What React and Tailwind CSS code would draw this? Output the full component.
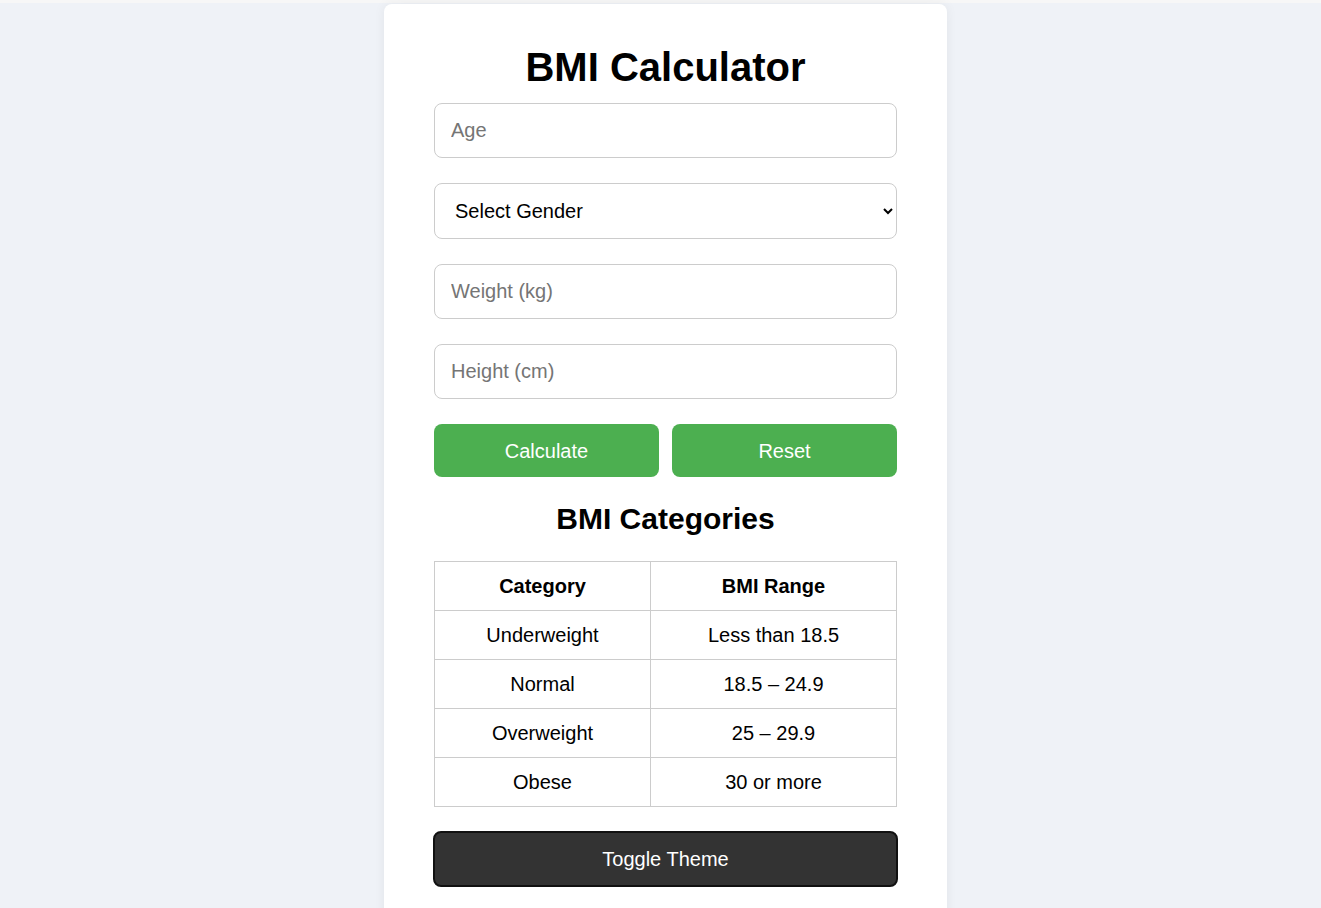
import React from "react";

const rows = [
  ["Underweight", "Less than 18.5"],
  ["Normal", "18.5 – 24.9"],
  ["Overweight", "25 – 29.9"],
  ["Obese", "30 or more"],
];

export default function App() {
  const font = { fontFamily: '"Liberation Sans", Arial, sans-serif' };
  return (
    <div className="min-h-[908px] bg-[#eff2f7] text-black" style={font}>
      <div className="h-[3px] bg-[#f7f7f7]" />
      <div className="flex justify-center pl-[10px] pt-[1px]">
        <div className="w-[563px] rounded-[8px] bg-white px-[50px] pt-[40px] pb-[40px] shadow-[0_0_12px_rgba(0,0,0,0.06)]">
          <h1 className="text-center text-[40px] font-bold leading-[46px]">BMI Calculator</h1>
          <div className="mt-[13px] flex flex-col gap-[25px]">
            <input
              type="number"
              placeholder="Age"
              className="h-[55px] w-full rounded-[8px] border border-[#cccccc] bg-white px-[16px] text-[20px] leading-[23px] outline-none placeholder:text-[#757575]"
            />
            <select
              defaultValue=""
              className="h-[56px] w-full rounded-[8px] border border-[#cccccc] bg-white pl-[16px] pr-[18px] text-[20px] text-black outline-none"
            >
              <option value="">Select Gender</option>
              <option value="male">Male</option>
              <option value="female">Female</option>
            </select>
            <input
              type="number"
              placeholder="Weight (kg)"
              className="h-[55px] w-full rounded-[8px] border border-[#cccccc] bg-white px-[16px] text-[20px] leading-[23px] outline-none placeholder:text-[#757575]"
            />
            <input
              type="number"
              placeholder="Height (cm)"
              className="h-[55px] w-full rounded-[8px] border border-[#cccccc] bg-white px-[16px] text-[20px] leading-[23px] outline-none placeholder:text-[#757575]"
            />
            <div className="flex gap-[13px]">
              <button className="h-[53px] flex-1 rounded-[8px] bg-[#4caf50] text-[20px] text-white">Calculate</button>
              <button className="h-[53px] flex-1 rounded-[8px] bg-[#4caf50] text-[20px] text-white">Reset</button>
            </div>
          </div>
          <h2 className="mt-[25px] text-center text-[30px] font-bold leading-[34px]">BMI Categories</h2>
          <table className="mt-[25px] w-full border-collapse text-[20px] leading-[24px]">
            <thead>
              <tr>
                <th className="w-[216px] border border-[#cccccc] py-[12px] text-center font-bold">Category</th>
                <th className="border border-[#cccccc] py-[12px] text-center font-bold">BMI Range</th>
              </tr>
            </thead>
            <tbody>
              {rows.map(([c, r]) => (
                <tr key={c}>
                  <td className="border border-[#cccccc] py-[12px] text-center">{c}</td>
                  <td className="border border-[#cccccc] py-[12px] text-center">{r}</td>
                </tr>
              ))}
            </tbody>
          </table>
          <button className="-mx-px mt-[24px] h-[56px] w-[465px] rounded-[8px] border-2 border-[#111111] bg-[#333333] text-[20px] text-white">
            Toggle Theme
          </button>
        </div>
      </div>
    </div>
  );
}
